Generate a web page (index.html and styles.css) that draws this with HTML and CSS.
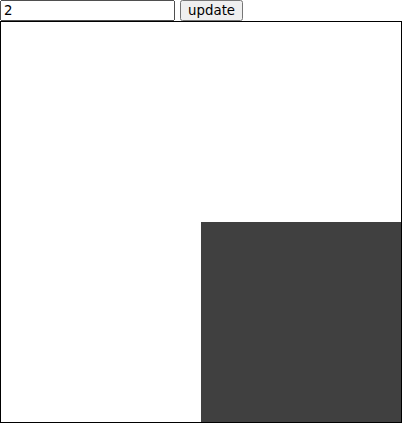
FILE: index.html
```html
<!DOCTYPE html>
<html>
<head>
    <title>Grid</title>
    <meta name="viewport" content="width=device-width, initial-scale=1.0">
    <link rel="stylesheet" href="styles.css">
</head>
<body>
    <div id="controls">
      <input type="text" id="size" value="2">
      <button id="update">update</button>
    </div>
    <div id="board">
      <div class="cell"></div>
      <div class="cell"></div>
      <div class="cell"></div>
      <div class="cell filled"></div>
    </div>
</body>
</html>
```

FILE: styles.css
```css
body {
    margin: 0;
    padding: 0;
    font-family: "DejaVu Sans", sans-serif;
}
#controls {
    height: 21px;
}
#size, #update {
    font-family: "DejaVu Sans", sans-serif;
    font-size: 13.33px;
    vertical-align: top;
}
#size {
    width: 175px;
    height: 21px;
    box-sizing: border-box;
}
#update {
    height: 21px;
    margin-left: 0;
}
#board {
    width: 400px;
    height: 400px;
    border: 1px solid black;
    display: grid;
    grid-template-columns: 1fr 1fr;
    grid-template-rows: 1fr 1fr;
}
.cell {
    background-color: white;
}
.filled {
    background-color: #404040;
}
```
